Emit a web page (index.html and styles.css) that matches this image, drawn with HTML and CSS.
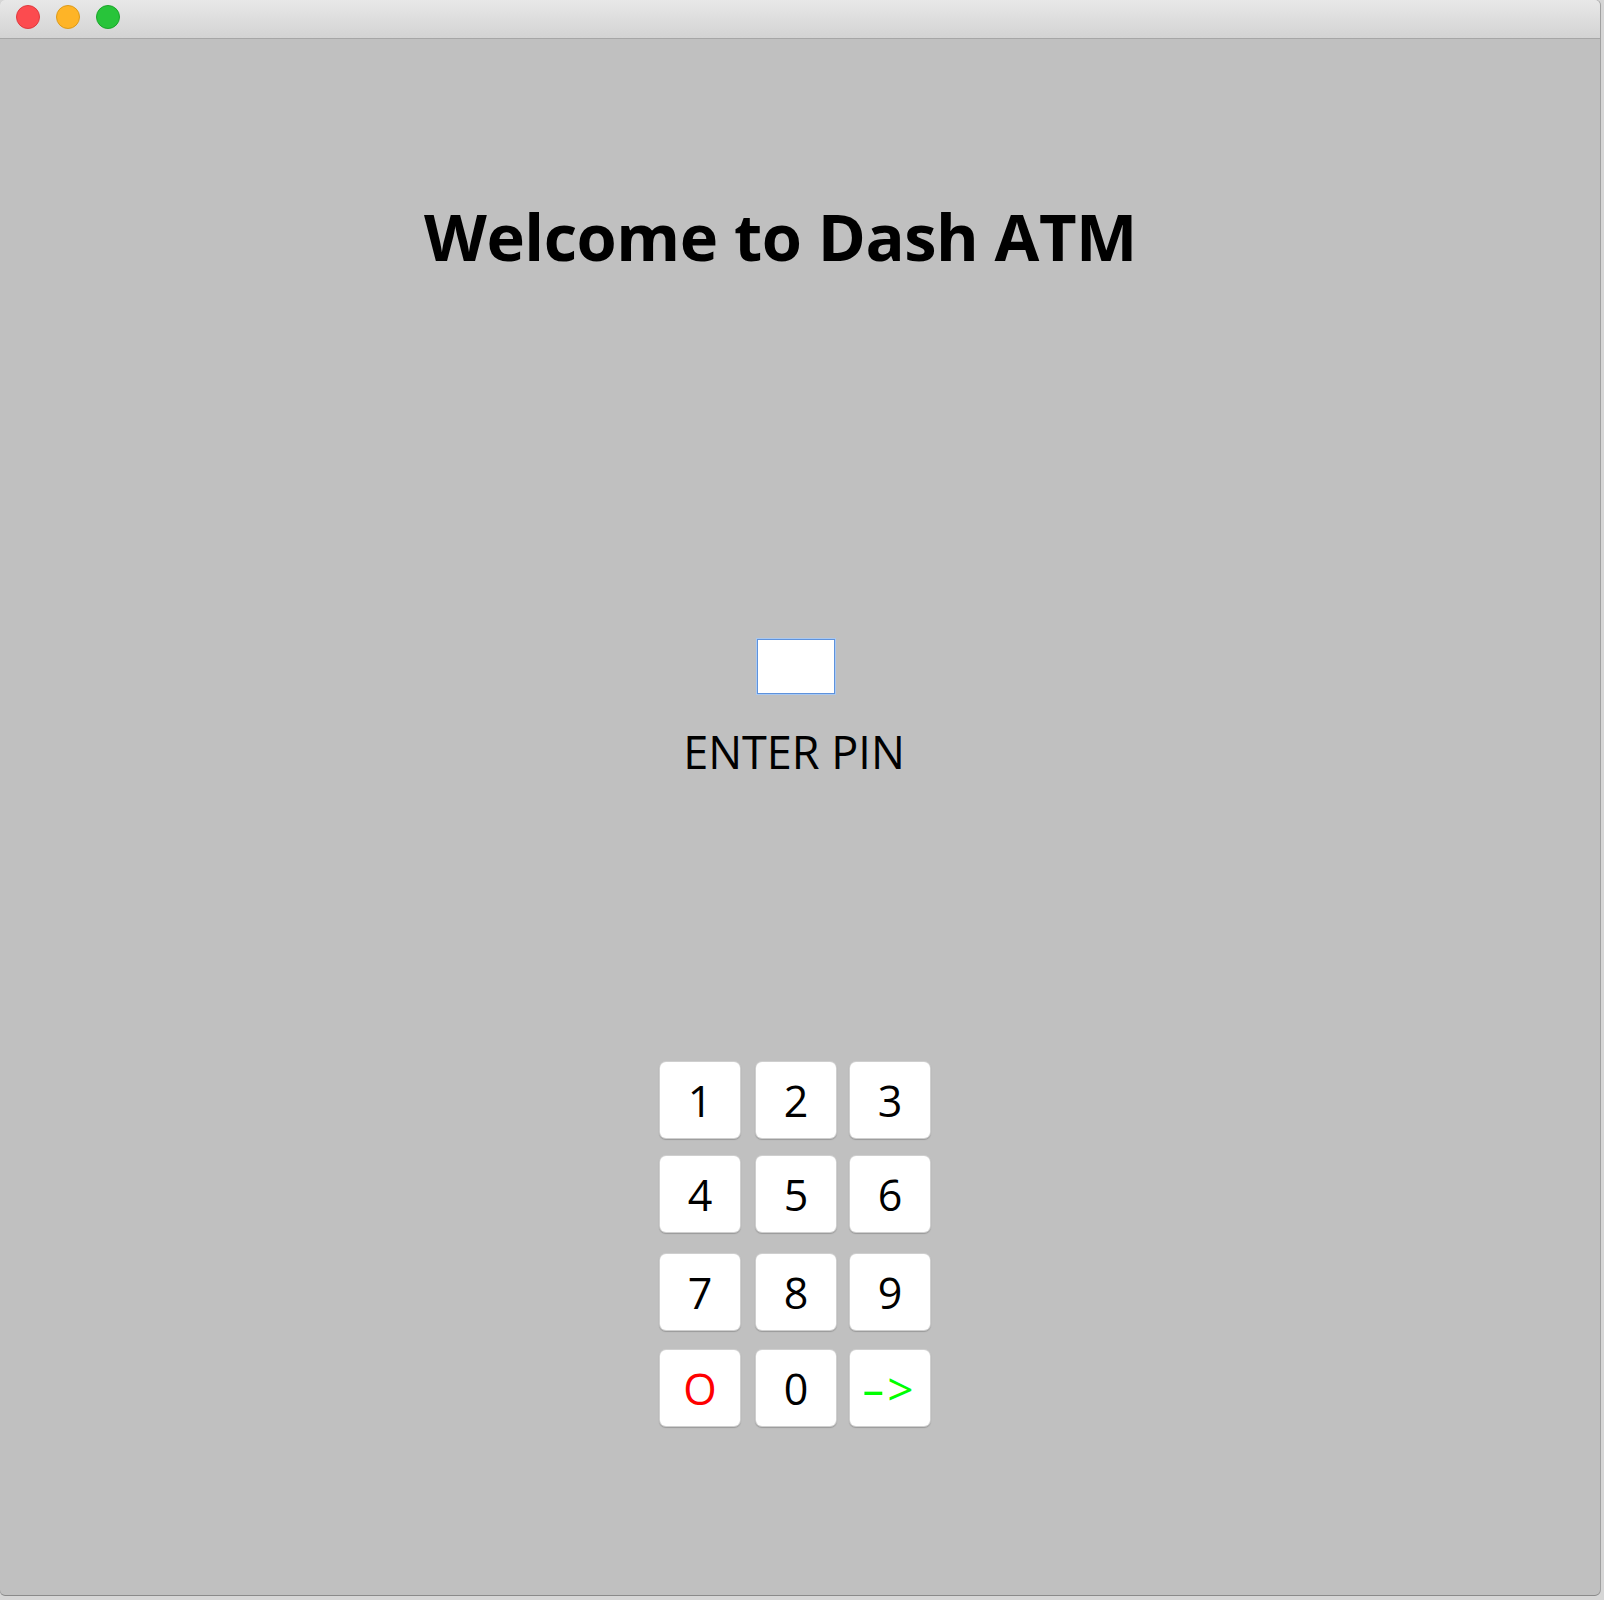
FILE: index.html
```html
<!DOCTYPE html>
<html>
<head>
<meta charset="utf-8">
<link rel="stylesheet" href="styles.css">
</head>
<body>
<div class="window">
  <div class="titlebar">
    <span class="light red"></span>
    <span class="light yellow"></span>
    <span class="light green"></span>
  </div>
  <div class="content">
    <h1 class="title">Welcome to Dash ATM</h1>
    <input class="pin" type="text">
    <div class="label">ENTER PIN</div>
    <div class="keypad">
      <div class="row"><button class="key">1</button><button class="key c2">2</button><button class="key c3">3</button></div>
      <div class="row r2"><button class="key">4</button><button class="key c2">5</button><button class="key c3">6</button></div>
      <div class="row r3"><button class="key">7</button><button class="key c2">8</button><button class="key c3">9</button></div>
      <div class="row r4"><button class="key cancel">O</button><button class="key c2">0</button><button class="key c3 enter"><span class="dash">-</span>&gt;</button></div>
    </div>
  </div>
</div>
</body>
</html>
```
FILE: styles.css
```css
html, body {
  margin: 0;
  padding: 0;
}
body {
  width: 1604px;
  height: 1600px;
  background: #d6d6d6;
  font-family: "Open Sans", sans-serif;
  overflow: hidden;
}
.window {
  width: 1600px;
  height: 1595px;
  background: #c0c0c0;
  border-radius: 5px;
  box-shadow: 0 1px 0 #8a8a8a, 1px 0 0 #a0a0a0;
  overflow: hidden;
  display: flex;
  flex-direction: column;
}
.titlebar {
  flex: none;
  height: 39px;
  box-sizing: border-box;
  background: linear-gradient(#e8e8e8, #d3d3d3);
  border-bottom: 1px solid #a6a6a6;
  display: flex;
  align-items: center;
  gap: 16px;
  padding-left: 16px;
  padding-bottom: 4px;
}
.light {
  width: 22px;
  height: 22px;
  border-radius: 50%;
  display: block;
}
.red { background: #fc4b4f; border: 1px solid #de3a3e; }
.yellow { background: #feb427; border: 1px solid #dc9a1a; }
.green { background: #28c43a; border: 1px solid #1ba52a; }
.content {
  display: flex;
  flex-direction: column;
  align-items: center;
  padding-right: 10px;
}
.title {
  margin: 157px 29px 0 0;
  font-family: "Open Sans", sans-serif;
  font-size: 65px;
  font-weight: bold;
  letter-spacing: -0.5px;
  line-height: 80px;
  color: #000;
}
.pin {
  margin: 363px 0 0 2px;
  width: 78px;
  height: 55px;
  box-sizing: border-box;
  border: 1px solid #5e92dc;
  box-shadow: 0 0 0 1px #a9c8f0;
  background: #fff;
  outline: none;
  padding: 0;
}
.label {
  margin: 33px 2px 0 0;
  font-family: "Open Sans", sans-serif;
  font-size: 45px;
  line-height: 50px;
  color: #000;
}
.keypad {
  margin-top: 285px;
  display: flex;
  flex-direction: column;
}
.row {
  display: flex;
}
.r2 { margin-top: 18px; }
.r3 { margin-top: 22px; }
.r4 { margin-top: 20px; }
.c2 { margin-left: 16px; }
.c3 { margin-left: 14px; }
.key {
  width: 80px;
  height: 76px;
  background: #fff;
  border: none;
  border-radius: 6px;
  box-shadow: 0 0 0 1px #cfcfcf, 0 1px 1px 1px #9a9a9a;
  font-family: "Open Sans", sans-serif;
  font-size: 43px;
  line-height: 1;
  color: #000;
  padding: 0;
}
.cancel { color: #ff0000; }
.enter {
  color: #00ff00;
  font-size: 46px;
}
.dash {
  display: inline-block;
  transform: scaleX(1.6);
  margin-right: 6px;
}
```
